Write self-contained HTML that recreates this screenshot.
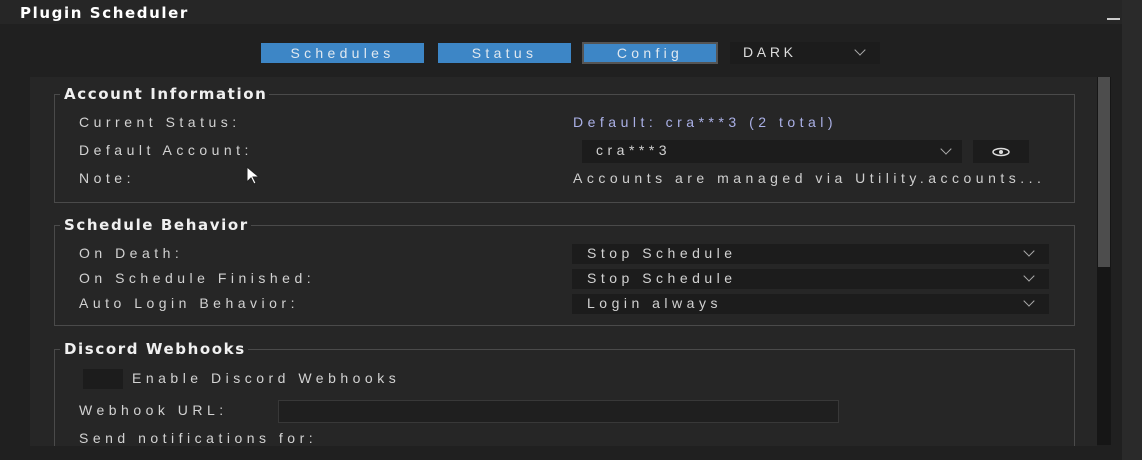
<!DOCTYPE html>
<html><head><style>
*{margin:0;padding:0;box-sizing:border-box}
body{width:1142px;height:460px;background:#2a2a2a;position:relative;overflow:hidden;font-family:"Liberation Sans",sans-serif;color:#d2d2d2}
.a{position:absolute}
.t{font-size:14px;letter-spacing:4.5px;white-space:nowrap}
.h{font-family:"DejaVu Sans",sans-serif;font-size:15px;font-weight:bold;letter-spacing:1.6px;color:#f0f0f0;white-space:nowrap;background:#262626;padding:0 2px 0 4px}
.g{border:1px solid #4a4a4a}
.tab{background:#3d86c6;color:#dfe8f0;font-size:14px;letter-spacing:4.3px;text-align:center;line-height:20px}
.dd{background:#1c1c1c}
.chev{position:absolute;right:12px;top:4px;width:8px;height:8px;border-right:1.5px solid #aaa;border-bottom:1.5px solid #aaa;transform:rotate(45deg)}
</style></head><body>
<div class="a" style="left:0;top:0;width:1122px;height:460px;background:#202020"></div>
<div class="a" style="left:0;top:0;width:1122px;height:24px;background:#262626"></div>
<div class="a" style="left:20px;top:4px;font-family:'DejaVu Sans',sans-serif;font-size:15px;font-weight:bold;letter-spacing:1.6px;color:#fff;white-space:nowrap">Plugin Scheduler</div>
<div class="a" style="left:1107px;top:18px;width:13px;height:2px;background:#ccc"></div>

<div class="a tab" style="left:261px;top:43px;width:163px;height:20px">Schedules</div>
<div class="a tab" style="left:438px;top:43px;width:133px;height:20px">Status</div>
<div class="a tab" style="left:582px;top:42px;width:136px;height:22px;border:2px solid #555;line-height:18px">Config</div>
<div class="a dd" style="left:730px;top:42px;width:150px;height:22px"><span class="t" style="position:absolute;left:13px;top:2px;color:#ddd;letter-spacing:3.7px">DARK</span><div class="chev" style="right:16px"></div></div>

<div class="a" style="left:30px;top:77px;width:1067px;height:370px;background:#262626"></div>
<div class="a" style="left:1097px;top:77px;width:14px;height:368px;background:#161616"></div>
<div class="a" style="left:1098px;top:77px;width:12px;height:190px;background:#4d4d4d"></div>

<div class="a g" style="left:54px;top:94px;width:1021px;height:109px"></div>
<div class="a h" style="left:60px;top:85px">Account Information</div>
<div class="a t" style="left:79px;top:114px">Current Status:</div>
<div class="a t" style="left:79px;top:142px">Default Account:</div>
<div class="a t" style="left:79px;top:170px">Note:</div>
<svg class="a" style="left:246px;top:166px" width="22" height="20"><path d="M1 1 L1 16 L5 12 L8 18 L10 17 L7 11 L13 11 Z" fill="#fff" stroke="#222" stroke-width="1"/></svg>
<div class="a t" style="left:573px;top:114px;color:#aab0e6">Default: cra***3 (2 total)</div>
<div class="a dd" style="left:582px;top:140px;width:380px;height:23px"><span class="t" style="position:absolute;left:14px;top:2px">cra***3</span><div class="chev" style="top:5px"></div></div>
<div class="a dd" style="left:973px;top:140px;width:56px;height:23px"><svg style="position:absolute;left:18px;top:7px" width="20" height="10"><ellipse cx="10" cy="5" rx="8" ry="3.5" fill="none" stroke="#ddd" stroke-width="1.5"/><circle cx="10" cy="5" r="2" fill="#ddd"/></svg></div>
<div class="a t" style="left:573px;top:170px;color:#cfcfcf">Accounts are managed via Utility.accounts...</div>

<div class="a g" style="left:54px;top:225px;width:1021px;height:101px"></div>
<div class="a h" style="left:60px;top:216px">Schedule Behavior</div>
<div class="a t" style="left:79px;top:245px">On Death:</div>
<div class="a t" style="left:79px;top:270px">On Schedule Finished:</div>
<div class="a t" style="left:79px;top:295px">Auto Login Behavior:</div>
<div class="a dd" style="left:572px;top:244px;width:477px;height:20px"><span class="t" style="position:absolute;left:15px;top:1px">Stop Schedule</span><div class="chev" style="top:3px;right:16px"></div></div>
<div class="a dd" style="left:572px;top:269px;width:477px;height:20px"><span class="t" style="position:absolute;left:15px;top:1px">Stop Schedule</span><div class="chev" style="top:3px;right:16px"></div></div>
<div class="a dd" style="left:572px;top:294px;width:477px;height:20px"><span class="t" style="position:absolute;left:15px;top:1px">Login always</span><div class="chev" style="top:3px;right:16px"></div></div>

<div class="a g" style="left:54px;top:349px;width:1021px;height:110px"></div>
<div class="a h" style="left:60px;top:340px">Discord Webhooks</div>
<div class="a" style="left:83px;top:369px;width:40px;height:20px;background:#1c1c1c"></div>
<div class="a t" style="left:132px;top:370px">Enable Discord Webhooks</div>
<div class="a t" style="left:79px;top:402px">Webhook URL:</div>
<div class="a" style="left:278px;top:400px;width:561px;height:23px;background:#1f1f1f;border:1px solid #383838"></div>
<div class="a t" style="left:79px;top:430px">Send notifications for:</div>
<div class="a" style="left:0;top:446px;width:1122px;height:14px;background:#202020"></div>
<div class="a" style="left:1122px;top:0;width:20px;height:460px;background:#2a2a2a"></div>
</body></html>
